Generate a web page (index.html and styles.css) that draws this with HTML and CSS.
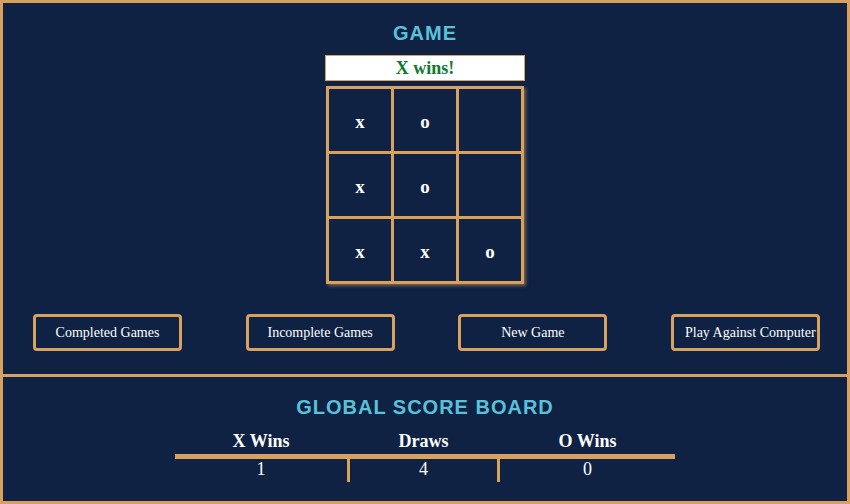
FILE: index.html
```html
<!DOCTYPE html>
<html lang="en">
<head>
<meta charset="utf-8">
<title>Game</title>
<link rel="stylesheet" href="styles.css">
</head>
<body>
<main class="app">
  <section class="game">
    <h1 class="title">GAME</h1>
    <div class="status">X wins!</div>
    <div class="board">
      <div class="cell">x</div>
      <div class="cell">o</div>
      <div class="cell"></div>
      <div class="cell">x</div>
      <div class="cell">o</div>
      <div class="cell"></div>
      <div class="cell">x</div>
      <div class="cell">x</div>
      <div class="cell">o</div>
    </div>
    <div class="actions">
      <button class="btn">Completed Games</button>
      <button class="btn">Incomplete Games</button>
      <button class="btn">New Game</button>
      <button class="btn">Play Against Computer</button>
    </div>
  </section>
  <section class="scores">
    <h1 class="title">GLOBAL SCORE BOARD</h1>
    <div class="score-table">
      <div class="head">X Wins</div>
      <div class="head">Draws</div>
      <div class="head">O Wins</div>
      <div class="val">1</div>
      <div class="val mid">4</div>
      <div class="val">0</div>
    </div>
  </section>
</main>
</body>
</html>
```

FILE: styles.css
```css
html, body {
  margin: 0;
  padding: 0;
  background: #0f2243;
}

.app {
  width: 850px;
  height: 504px;
  box-sizing: border-box;
  border: 3px solid #d9a15e;
  background: #0f2243;
  display: flex;
  flex-direction: column;
}

.game {
  padding: 18px 0 23px;
  border-bottom: 3px solid #d9a15e;
  display: flex;
  flex-direction: column;
  align-items: center;
}

.title {
  margin: 0;
  font-family: "Liberation Sans", Arial, sans-serif;
  font-weight: bold;
  font-size: 20px;
  line-height: 24px;
  letter-spacing: 1px;
  color: #5bc1d9;
  text-align: center;
}

.status {
  margin-top: 10px;
  width: 200px;
  height: 26px;
  box-sizing: border-box;
  border: 1px solid #d9a15e;
  background: #ffffff;
  color: #0b7a2c;
  font-family: "Liberation Serif", "Times New Roman", serif;
  font-weight: bold;
  font-size: 18px;
  line-height: 24px;
  text-align: center;
}

.board {
  margin-top: 5px;
  display: grid;
  grid-template-columns: repeat(3, 62px);
  grid-template-rows: repeat(3, 62px);
  gap: 3px;
  padding: 3px;
  background: #d9a15e;
  box-shadow: 2px 2px 3px rgba(200, 150, 90, 0.55);
}

.cell {
  background: #0f2243;
  color: #ffffff;
  font-family: "Liberation Serif", "Times New Roman", serif;
  font-weight: bold;
  font-size: 19px;
  display: flex;
  align-items: center;
  justify-content: center;
  padding-top: 3px;
  box-sizing: border-box;
}

.actions {
  align-self: stretch;
  margin-top: 30px;
  padding: 0 27px 0 30px;
  display: flex;
  justify-content: space-between;
}

.btn {
  width: 149px;
  height: 37px;
  box-sizing: border-box;
  border: 3px solid #d9a15e;
  border-radius: 4px;
  background: transparent;
  color: #ffffff;
  font-family: "Liberation Serif", "Times New Roman", serif;
  font-size: 14px;
  padding: 0 11px;
  white-space: nowrap;
  text-align: center;
  cursor: pointer;
}

.scores {
  flex: 1;
  padding-top: 18px;
  display: flex;
  flex-direction: column;
  align-items: center;
}

.score-table {
  margin-top: 11px;
  width: 500px;
  display: grid;
  grid-template-columns: 172px 153px 175px;
  font-family: "Liberation Serif", "Times New Roman", serif;
  color: #ffffff;
  font-size: 18px;
}

.head {
  font-weight: bold;
  line-height: 22px;
  padding-bottom: 2px;
  text-align: center;
  border-bottom: 5px solid #d9a15e;
}

.val {
  line-height: 20px;
  padding-bottom: 3px;
  text-align: center;
}

.val.mid {
  border-left: 3px solid #d9a15e;
  border-right: 3px solid #d9a15e;
}
```
